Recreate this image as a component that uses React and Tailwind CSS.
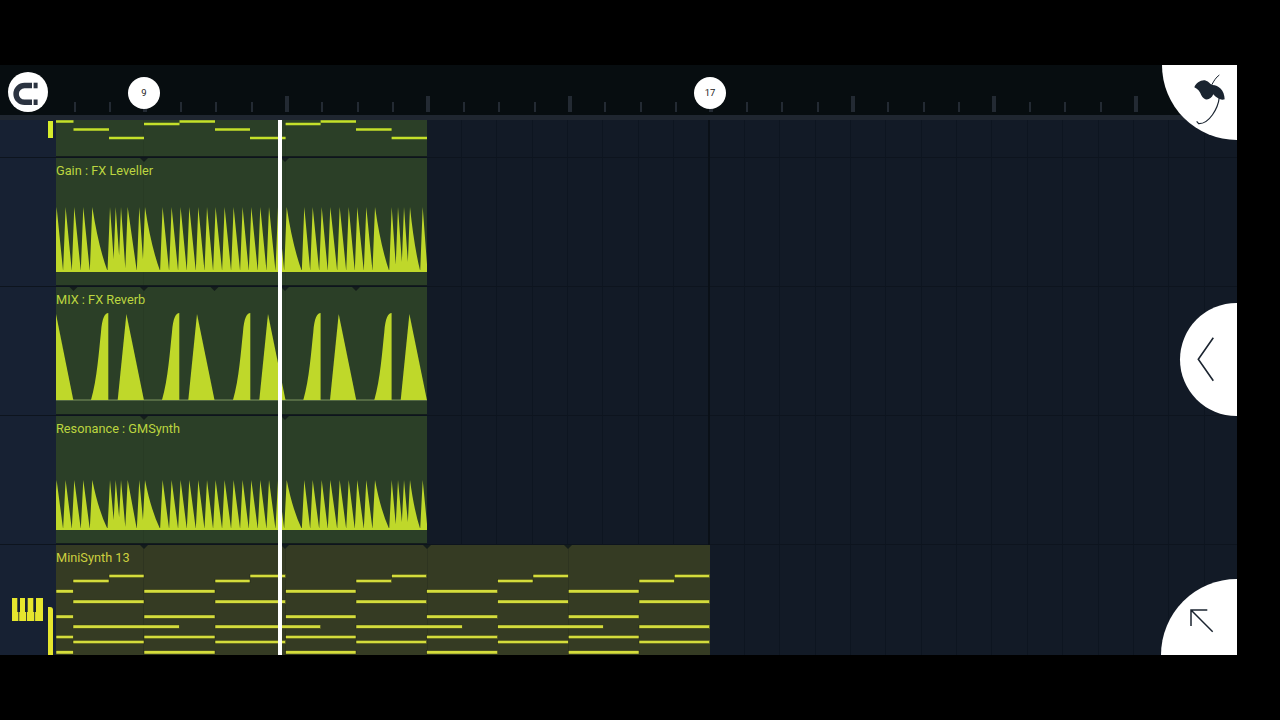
import React from 'react';

const BEAT_COUNT = 31;

// apex x of each spike in the two envelope clips
const SPIKES = [56.6, 65.6, 74.3, 83.3, 92.3, 110, 115.7, 121, 127.7, 139.3, 145, 162.6, 171.6, 180.6, 189.3, 198.3, 207, 215.6, 224.6, 233.6, 242.6, 251.3, 260.3, 269, 278, 286.7, 304.3, 312.7, 321.7, 330.3, 339.7, 348.7, 357.3, 366.3, 375, 391.7, 398, 404, 410, 422.7];

const TOP_NOTES = [
  [56, 73.5, 121.5], [73.5, 109, 129.5], [109, 144, 138], [144, 179.5, 124], [179.5, 215, 121.5], [215, 250, 129.5],
  [250, 285.6, 138], [285.6, 320.6, 124], [320.6, 356, 121.5], [356, 391.6, 129.5], [391.6, 427, 138],
];

const SPAN_A = [[56, 73.3], [144, 215], [285.7, 356], [426.7, 497.7], [568.3, 639]];
const SPAN_B = [[73, 144], [215, 285.7], [356, 426.7], [497.7, 568.3], [639, 709.7]];
const SPAN_C = [[73, 179.3], [215, 320.7], [356, 462.3], [497.7, 603.3], [639, 709.7]];
const SPAN_D = [[109, 144], [250, 285.7], [391.7, 426.7], [533, 568.3], [674.3, 709.7]];
const SPAN_E = [[73, 109], [215, 250], [356, 391.7], [497.7, 533], [639, 674.3]];

const SYNTH_LINES = [
  [576, SPAN_D], [581, SPAN_E], [591.3, SPAN_A], [601.7, SPAN_B], [616.7, SPAN_A],
  [626.7, SPAN_C], [637, SPAN_A], [642, SPAN_B], [652.3, SPAN_A],
];

function Markers({ xs, y }) {
  return xs.map((x) => (
    <polygon key={x} points={`${x - 4},${y} ${x + 4},${y} ${x},${y + 4}`} fill="#141d1b" />
  ));
}

function BarLines({ xs, y, h, color }) {
  return xs.map((x) => <rect key={x} x={x} y={y} width="1" height={h} fill={color} />);
}

function Envelope({ top, base, apex }) {
  const d = SPIKES.map((x, i) => {
    const next = SPIKES[i + 1] ?? 430;
    const right = Math.max(next - 2.5, x + 4.5);
    const h = base - apex;
    const wide = right - x > 10;
    const cx = x + (right - x) * (wide ? 0.4 : 0.5);
    const cy = base - h * (wide ? 0.38 : 0.5);
    return `M${x - 2.5} ${base} L${x} ${apex} Q${cx} ${cy} ${right} ${base} Z`;
  }).join(' ');
  return (
    <svg width="371" height="127" viewBox={`56 ${top} 371 127`} className="absolute inset-0">
      <BarLines xs={[143, 285]} y={top} h={127} color="#283b24" />
      <Markers xs={[144, 285]} y={top} />
      <path d={d} fill="#bfd82a" />
      <rect x="56" y={base - 1} width="371" height="2" fill="#bfd82a" />
    </svg>
  );
}

function Reverb() {
  const base = 400;
  const curves = [91, 162, 233, 303.3, 374.3];
  const tris = [117.7, 188.3, 259.3, 330, 400.7];
  return (
    <svg width="371" height="127" viewBox="56 287 371 127" className="absolute inset-0">
      <BarLines xs={[143, 285]} y={287} h={127} color="#283b24" />
      <Markers xs={[73.5, 144, 214.5, 285, 356]} y={287} />
      <rect x="56" y={base - 0.5} width="371" height="1" fill="#7f9660" />
      <path d={`M56 314 L73.3 ${base} H56 Z`} fill="#bfd82a" />
      {curves.map((x) => (
        <path
          key={x}
          d={`M${x} ${base} C${x + 6} ${base - 20} ${x + 8} ${base - 50} ${x + 10} ${base - 68} C${x + 11} ${base - 82} ${x + 14} ${base - 87} ${x + 17.3} ${base - 87} V${base} Z`}
          fill="#bfd82a"
        />
      ))}
      {tris.map((x) => (
        <path key={x} d={`M${x} ${base} L${x + 8.7} 314 L${x + 26.2} ${base} Z`} fill="#bfd82a" />
      ))}
    </svg>
  );
}

function TopNotes() {
  return (
    <svg width="371" height="36" viewBox="56 120 371 36" className="absolute inset-0">
      <BarLines xs={[143, 285]} y={120} h={36} color="#283b24" />
      {TOP_NOTES.map(([a, b, y]) => (
        <rect key={a} x={a} y={y - 1.25} width={b - a} height="2.5" fill="#c4e02a" />
      ))}
    </svg>
  );
}

function SynthNotes() {
  return (
    <svg width="654" height="110" viewBox="56 545 654 110" className="absolute inset-0">
      <BarLines xs={[143, 285, 427, 568]} y={545} h={110} color="#2e3420" />
      <Markers xs={[144, 285, 427, 568]} y={545} />
      {SYNTH_LINES.map(([y, spans]) =>
        spans.map(([a, b]) => (
          <rect key={`${y}-${a}`} x={a} y={y - 1.75} width={b - a} height="3.5" fill="#d4dc3c" stroke="#1f2312" strokeWidth="0.5" />
        ))
      )}
    </svg>
  );
}

function ClipLabel({ children, olive }) {
  return (
    <span className={`absolute left-0 top-[4px] text-[12.75px] leading-[18px] font-['Roboto',sans-serif] ${olive ? 'text-[#cdd03f]' : 'text-[#bcd540]'}`}>
      {children}
    </span>
  );
}

function TrackRow({ height, last, side, children }) {
  return (
    <div className={`flex ${height} ${last ? '' : 'border-b border-[#0d141e]'}`}>
      <div className="w-14 shrink-0 bg-[#172133]">{side}</div>
      {children}
    </div>
  );
}

function GreenClip({ label, children }) {
  return (
    <div className="relative w-[371px] bg-[#2b3f27] border-b border-[#141d1b]">
      {children}
      {label && <ClipLabel>{label}</ClipLabel>}
    </div>
  );
}

function PianoIcon() {
  return (
    <svg width="31" height="23" viewBox="0 0 31 23" className="mb-[34px]">
      <rect x="0" y="0" width="31" height="23" fill="#e6e62e" />
      <rect x="5.3" y="0" width="2.7" height="14" fill="#172133" />
      <rect x="13" y="0" width="2.7" height="14" fill="#172133" />
      <rect x="21.3" y="0" width="2.7" height="14" fill="#172133" />
      <rect x="6.4" y="14" width="0.8" height="9" fill="#172133" />
      <rect x="14" y="14" width="0.8" height="9" fill="#172133" />
      <rect x="22.3" y="14" width="0.8" height="9" fill="#172133" />
    </svg>
  );
}

function Ruler() {
  return (
    <div className="relative h-[50px] bg-[#070d10] flex items-end pl-[57px] pb-[3px]">
      {Array.from({ length: BEAT_COUNT }).map((_, i) => (
        <div key={i} className="w-[35.375px] shrink-0 flex justify-center">
          {i % 4 === 2 ? (
            <div className="w-1 h-4 bg-[#232a33]" />
          ) : (
            <div className="w-[2px] h-[10px] bg-[#232a33]" />
          )}
        </div>
      ))}
      <button className="absolute left-2 top-[7px] w-10 h-10 rounded-full bg-white">
        <svg width="40" height="40" viewBox="8 72 40 40">
          <path d="M32 85.5 H24.5 a8.4 8.4 0 0 0 0 16.8 H32" fill="none" stroke="#2b3340" strokeWidth="5.5" />
          <rect x="33.6" y="82.7" width="4" height="5.6" fill="#2b3340" />
          <rect x="33.6" y="99.5" width="4" height="5.5" fill="#2b3340" />
        </svg>
      </button>
      <div className="absolute left-[128px] top-3 w-8 h-8 rounded-full bg-white flex items-center justify-center text-[9.5px] text-[#222] font-['Roboto',sans-serif]">9</div>
      <div className="absolute left-[694px] top-3 w-8 h-8 rounded-full bg-white flex items-center justify-center text-[9.5px] text-[#222] font-['Roboto',sans-serif]">17</div>
    </div>
  );
}

export default function App() {
  return (
    <div className="w-[1280px] h-[720px] bg-black pt-[65px] pb-[65px] pr-[43px] overflow-hidden">
      <div className="relative h-[590px] overflow-hidden">
        <Ruler />
        <div className="h-[5px] bg-[#1f2630]" />
        <div className="h-[535px] flex flex-col bg-[#121a26] bg-[repeating-linear-gradient(90deg,transparent_0_1px,#0d1520_1px_2px,transparent_2px_35.375px)]">
          <TrackRow
            height="h-[38px]"
            side={<div className="ml-12 mt-[1px] w-[5px] h-[17px] bg-[#d6ec2c]" />}
          >
            <GreenClip>
              <TopNotes />
            </GreenClip>
          </TrackRow>
          <TrackRow height="h-[129px]">
            <GreenClip label="Gain : FX Leveller">
              <Envelope top={158} base={271} apex={207} />
            </GreenClip>
          </TrackRow>
          <TrackRow height="h-[129px]">
            <GreenClip label="MIX : FX Reverb">
              <Reverb />
            </GreenClip>
          </TrackRow>
          <TrackRow height="h-[129px]">
            <GreenClip label="Resonance : GMSynth">
              <Envelope top={416} base={529} apex={480} />
            </GreenClip>
          </TrackRow>
          <TrackRow
            last
            height="flex-1"
            side={
              <div className="h-full flex items-end pl-3 gap-[5px]">
                <PianoIcon />
                <div className="w-[5px] h-[48px] rounded-tr-[3px] bg-[#e6e62e]" />
              </div>
            }
          >
            <div className="relative w-[654px] bg-[#353b23]">
              <SynthNotes />
              <ClipLabel olive>MiniSynth 13</ClipLabel>
            </div>
          </TrackRow>
        </div>

        {/* bar 17 line */}
        <div className="absolute left-[708px] top-[55px] bottom-[110px] w-[2px] bg-[#0a1017]" />
        {/* playhead */}
        <div className="absolute left-[278px] top-[55px] bottom-0 w-1 bg-white" />

        <div className="absolute right-0 top-0 w-[75px] h-[75px] rounded-bl-[75px] bg-white">
          <svg width="75" height="75" viewBox="96 15 225 225">
            <path d="M193 82 C198 68 215 58 228 62 C236 64 240 72 246 75 C264 74 284 90 284 118 C270 122 258 112 250 103 C242 122 222 124 214 106 C210 95 204 88 193 82 Z" fill="#1a2430" />
            <path d="M245 75 C252 62 258 52 268 45" fill="none" stroke="#1a2430" strokeWidth="3" />
            <path d="M268 112 C264 145 238 192 206 191 L200 184" fill="none" stroke="#1a2430" strokeWidth="3.5" />
          </svg>
        </div>
        <div className="absolute right-0 top-[238px] w-[57px] h-[113px] rounded-l-full bg-white">
          <svg width="57" height="113" viewBox="1180 303 57 113">
            <path d="M1213.3 337.7 L1198.3 359.3 L1213.3 380.7" fill="none" stroke="#1b2430" strokeWidth="1.6" />
          </svg>
        </div>
        <div className="absolute right-0 bottom-0 w-[76px] h-[76px] rounded-tl-[76px] bg-white">
          <svg width="76" height="76" viewBox="1161 579 76 76">
            <path d="M1191 626 V610 H1207.3 M1191 610 L1212.7 631.7" fill="none" stroke="#1b2430" strokeWidth="1.5" />
          </svg>
        </div>
      </div>
    </div>
  );
}
